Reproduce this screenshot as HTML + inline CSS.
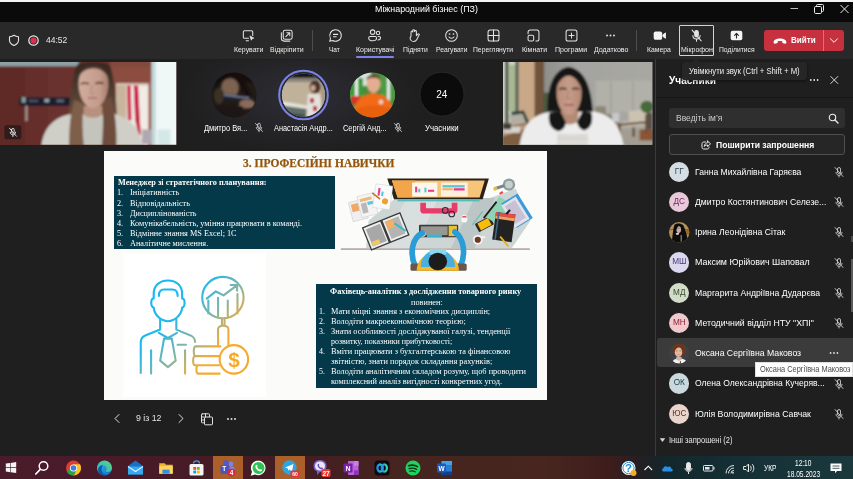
<!DOCTYPE html>
<html lang="uk">
<head>
<meta charset="utf-8">
<title>Міжнародний бізнес (ПЗ)</title>
<style>
*{box-sizing:border-box;margin:0;padding:0}
html,body{width:853px;height:479px;overflow:hidden;background:#1f1f1f;font-family:"Liberation Sans",sans-serif;color:#fff}
#app{will-change:transform;position:relative;width:853px;height:479px;overflow:hidden;background:#1f1f1f}
.abs{position:absolute}
svg{overflow:visible}
.t{position:absolute;white-space:nowrap;transform-origin:0 0;color:#fff}
.ico{fill:none;stroke:#e4e4e4;stroke-width:1.1;stroke-linecap:round;stroke-linejoin:round}
#topstrip{left:0;top:0;width:853px;height:2px;background:#f4f4f4}
#titlebar{left:0;top:2px;width:853px;height:19.800px;background:#0a0a0a}
#toolbar{left:0;top:21.800px;width:853px;height:37.100px;background:#292929}
.tbl{font-size:8.100px;line-height:10px;top:45px;color:#ededed}
.tbi{position:absolute;top:28.300px;width:15px;height:15px;margin-left:-7.500px}
.lbl{font-size:8.300px;line-height:11px;top:122.600px;color:#fff}
.stitle{font-family:"Liberation Serif",serif;font-weight:bold;font-size:13.200px;line-height:16px;color:#93560c;-webkit-text-stroke:.25px #93560c}
.s1{font-family:"Liberation Serif",serif;font-size:9px;line-height:10px;color:#fff}
.n1{transform:scaleX(.915)}
.n2{transform:scaleX(.96)}
.s2{font-family:"Liberation Serif",serif;font-size:8.300px;line-height:10px;color:#fff}
.b{font-weight:bold}
.ptitle{font-size:11px;line-height:14px;font-weight:bold}
.tip{font-size:8.200px;line-height:11px;color:#f0f0f0}
.tip2{font-size:8.400px;line-height:11px;color:#4a4a4a}
.pbtn{font-size:9.500px;line-height:12px;font-weight:bold}
.oth{font-size:8.500px;line-height:12px;color:#e8e8e8}
.nm{font-size:9.600px;line-height:13px;color:#fff}
.av{position:absolute;left:669.100px;width:20.400px;height:20.400px;border-radius:50%;font-size:8.200px;line-height:20.400px;text-align:center;font-weight:normal;overflow:hidden;margin-top:-10.200px}
.mc{position:absolute;left:833px;width:12px;height:12px;margin-top:-6px}
.ph1{background:radial-gradient(circle at 45% 40%,#c8a896 0,#c8a896 18%,#1a1614 22%,#1a1614 60%,#6a5a44 100%)}
.ph2{background:radial-gradient(circle at 50% 42%,#e0b09a 0,#e0b09a 20%,#6a3a28 24%,#5a3224 45%,#2a3440 50%,#2a3440 100%)}
.tray{font-size:8.800px;line-height:10px;color:#fff}
</style>
</head>
<body>
<div id="app">
<div id="topstrip" class="abs"></div>
<div id="titlebar" class="abs"></div>
<div class="t" style="left:375.3px;transform:scaleX(0.9871);top:3.300px;font-size:9px;line-height:12px">Міжнародний бізнес (ПЗ)</div>
<div id="toolbar" class="abs"></div>
<!-- window controls -->
<svg class="abs" style="left:770px;top:2px" width="83" height="19" viewBox="0 0 83 19">
 <g stroke="#ececec" stroke-width="1" fill="none">
  <path d="M20.500 6.500h7.500" stroke-width=".8"/>
  <rect x="44.500" y="4.500" width="7" height="7" rx="1.200"/>
  <path d="M46.500 4.500v-1c0-.6.400-1 1-1h5c.6 0 1 .4 1 1v5c0 .6-.4 1-1 1h-1"/>
  <path d="M70.500 3l8 8M78.500 3l-8 8"/>
 </g>
</svg>
<svg class="abs" style="left:7.500px;top:33.500px" width="12" height="13" viewBox="0 0 12 13"><path class="ico" d="M6 1.200c1.300 1 2.800 1.400 4.500 1.500v3.600c0 2.400-1.700 4.100-4.500 5.300C3.200 10.400 1.500 8.700 1.500 6.300V2.700C3.200 2.600 4.700 2.200 6 1.200z"/></svg>
<svg class="abs" style="left:28px;top:34.700px" width="11" height="11" viewBox="0 0 11 11"><circle cx="5.500" cy="5.500" r="4.700" fill="none" stroke="#ececec" stroke-width="1.200"/><circle cx="5.500" cy="5.500" r="3.100" fill="#d9314e"/></svg>
<div class="t" style="left:45.900px;transform:scaleX(0.9261);top:35px;font-size:9.200px;line-height:11px;color:#e8e8e8">44:52</div>

<svg class="tbi" style="left:248.4px" viewBox="0 0 16 16"><path class="ico" d="M12.500 8V4.200c0-.7-.5-1.200-1.200-1.200H3.700c-.7 0-1.200.5-1.200 1.200v5.600c0 .7.500 1.200 1.200 1.200H8M5.500 13.500H8"/><path d="M9.500 8.500l4.200 2.300-1.900.4-.8 1.800z" fill="#e4e4e4" stroke="#e4e4e4" stroke-width=".8" stroke-linejoin="round"/></svg>
<div class="t tbl" style="left:234.0px;transform:scaleX(0.8537);">Керувати</div>
<svg class="tbi" style="left:286.8px" viewBox="0 0 16 16"><rect class="ico" x="4.500" y="2.500" width="9.500" height="9.500" rx="2"/><path class="ico" d="M11.500 14H5.500C3.800 14 2.500 12.700 2.500 11V5"/><path class="ico" d="M7.300 9.200l4-4M8.300 5h3.200v3.200"/></svg>
<div class="t tbl" style="left:269.7px;transform:scaleX(0.8636);">Відкріпити</div>
<svg class="tbi" style="left:335.0px" viewBox="0 0 16 16"><path class="ico" d="M8 1.800a6.200 6.200 0 1 1-3 11.600L1.800 14.200l.9-3.100A6.200 6.200 0 0 1 8 1.800z"/><path class="ico" d="M5.800 6.800h4.600M5.800 9.300h3"/></svg>
<div class="t tbl" style="left:329.4px;transform:scaleX(0.8037);">Чат</div>
<svg class="tbi" style="left:374.6px" viewBox="0 0 16 16"><circle class="ico" cx="6" cy="4.400" r="2.400"/><circle class="ico" cx="11.800" cy="5.200" r="1.800"/><path class="ico" d="M1.800 10.700c0-.9.700-1.600 1.600-1.600h5.200c.9 0 1.600.7 1.600 1.600 0 1.800-1.600 3-4.200 3s-4.200-1.200-4.200-3z"/><path class="ico" d="M11.800 9.100h1.200c.8 0 1.400.6 1.400 1.400 0 1.400-1 2.300-2.700 2.400"/></svg>
<div class="t tbl" style="left:355.7px;transform:scaleX(0.8593);">Користувачі</div>
<svg class="tbi" style="left:414.7px" viewBox="0 0 16 16"><path class="ico" d="M4.300 8.500V4.200a.95.95 0 0 1 1.900 0V2.700a.95.95 0 0 1 1.900 0v1a.95.95 0 0 1 1.900 0v4.500l1.500-1.600c.5-.5 1.300-.4 1.700.2l-2.700 5.400c-.6 1.300-1.800 2.200-3.500 2.200-2.100 0-3.700-1.600-3.700-3.700z"/></svg>
<div class="t tbl" style="left:402.7px;transform:scaleX(0.8395);">Підняти</div>
<svg class="tbi" style="left:451.1px" viewBox="0 0 16 16"><circle class="ico" cx="8" cy="8" r="6.200"/><path class="ico" d="M5.300 9.600c1.400 1.800 4 1.800 5.400 0"/><circle cx="5.900" cy="6.400" r=".9" fill="#e4e4e4"/><circle cx="10.100" cy="6.400" r=".9" fill="#e4e4e4"/></svg>
<div class="t tbl" style="left:435.5px;transform:scaleX(0.8304);">Реагувати</div>
<svg class="tbi" style="left:493.2px" viewBox="0 0 16 16"><rect class="ico" x="2.200" y="2.200" width="11.600" height="11.600" rx="2.200"/><path class="ico" d="M8 2.200v11.600M2.200 8h11.600"/></svg>
<div class="t tbl" style="left:473.2px;transform:scaleX(0.8362);">Переглянути</div>
<svg class="tbi" style="left:533.9px" viewBox="0 0 16 16"><path class="ico" d="M2.200 6V4.400c0-1.200 1-2.200 2.200-2.200h7.200c1.200 0 2.200 1 2.200 2.200v7.200c0 1.200-1 2.200-2.200 2.200H10.500"/><rect class="ico" x="2.200" y="7.800" width="6" height="6" rx="1.600"/></svg>
<div class="t tbl" style="left:521.6px;transform:scaleX(0.8623);">Кімнати</div>
<svg class="tbi" style="left:571.0px" viewBox="0 0 16 16"><rect class="ico" x="2.200" y="2.200" width="11.600" height="11.600" rx="2.200"/><path class="ico" d="M8 5.300v5.400M5.300 8h5.400"/></svg>
<div class="t tbl" style="left:555.2px;transform:scaleX(0.8705);">Програми</div>
<svg class="tbi" style="left:610.4px" viewBox="0 0 16 16"><circle cx="4.300" cy="8" r="1" fill="#e4e4e4"/><circle cx="8" cy="8" r="1" fill="#e4e4e4"/><circle cx="11.700" cy="8" r="1" fill="#e4e4e4"/></svg>
<div class="t tbl" style="left:593.6px;transform:scaleX(0.8709);">Додатково</div>
<svg class="tbi" style="left:659.1px" viewBox="0 0 16 16"><rect x="1.800" y="3.600" width="9" height="9" rx="2" fill="#f4f4f4"/><path d="M11.600 7.200l2.800-2v5.800l-2.800-2z" fill="#f4f4f4" stroke="#f4f4f4" stroke-width=".9" stroke-linejoin="round"/></svg>
<div class="t tbl" style="left:647.3px;transform:scaleX(0.8411);">Камера</div>
<svg class="tbi" style="left:696.7px" viewBox="0 0 16 16"><path class="ico" style="fill:#e4e4e4" d="M6.100 4.500v3.300a1.900 1.900 0 0 0 3.800 0V4.500a1.900 1.900 0 0 0-3.800 0z"/><path class="ico" d="M4.100 8c0 2.100 1.700 3.800 3.900 3.800s3.900-1.700 3.900-3.800M8 11.800v2.200M3.300 2.300l9.700 11.400"/></svg>
<div class="t tbl" style="left:680.6px;transform:scaleX(0.8688);">Мікрофон</div>
<svg class="tbi" style="left:736.8px" viewBox="0 0 16 16"><rect x="1.800" y="3" width="12.400" height="10" rx="2" fill="#f4f4f4"/><path d="M8 10.700V6M6 7.800l2-2 2 2" fill="none" stroke="#292929" stroke-width="1.200" stroke-linecap="round" stroke-linejoin="round"/></svg>
<div class="t tbl" style="left:718.8px;transform:scaleX(0.8361);">Поділитися</div>
<div class="abs" style="left:312px;top:30.400px;width:1px;height:20.400px;background:#4d4d4d"></div>
<div class="abs" style="left:636px;top:30.400px;width:1px;height:20.400px;background:#4d4d4d"></div>
<div class="abs" style="left:355.700px;top:56px;width:38.400px;height:2px;background:#7b83eb;border-radius:1px"></div>
<div class="abs" style="left:679px;top:25px;width:34.500px;height:30.700px;border:1px solid #d4d4d4;border-radius:1px"></div>
<div class="abs" style="left:763.700px;top:30.100px;width:80.500px;height:20.600px;background:#c7303f;border-radius:3px"></div>
<div class="abs" style="left:823px;top:30.100px;width:1px;height:20.600px;background:#dc6f78"></div>
<svg class="abs" style="left:773px;top:36.500px" width="14" height="8" viewBox="0 0 14 8"><path d="M.6 5.300C.6 2.700 3.800 1.500 7 1.500s6.400 1.200 6.400 3.800c0 1-.5 1.500-1.300 1.400l-1.900-.4c-.6-.1-.9-.5-.9-1.100V4.300c-1.500-.4-3.100-.4-4.600 0v.9c0 .6-.3 1-.9 1.100l-1.900.4C1.100 6.800.6 6.300.6 5.300z" fill="#fff"/></svg>
<div class="t" style="left:791.300px;transform:scaleX(0.8213);top:34.300px;font-size:9.800px;line-height:12px;font-weight:bold">Вийти</div>
<svg class="abs" style="left:829px;top:37px" width="10" height="7" viewBox="0 0 10 7"><path d="M1.200 1.500l3.800 3.800 3.800-3.800" fill="none" stroke="#fff" stroke-width="1"/></svg>

<!-- left video -->
<svg class="abs" style="left:0;top:62.100px" width="176.300" height="82.800" viewBox="0 0 176.300 82.800">
 <defs>
  <filter id="b1" x="-10%" y="-10%" width="120%" height="120%"><feGaussianBlur stdDeviation="1.200"/></filter>
  <filter id="bz" x="-10%" y="-10%" width="120%" height="120%"><feGaussianBlur stdDeviation="5"/></filter>
  <linearGradient id="wallL" gradientUnits="userSpaceOnUse" x1="-218" x2="200" y1="0" y2="0"><stop offset="0" stop-color="#5a2a28"/><stop offset="0.500" stop-color="#683230"/><stop offset="1" stop-color="#703733"/></linearGradient>
  <linearGradient id="hairL" x1="0" x2="0" y1="0" y2="1"><stop offset="0" stop-color="#35261f"/><stop offset="0.400" stop-color="#574034"/><stop offset="1" stop-color="#86664e"/></linearGradient>
  <linearGradient id="skinL" x1="0" x2="1" y1="0" y2="0"><stop offset="0" stop-color="#d2ac9c"/><stop offset="0.700" stop-color="#c49c8c"/><stop offset="1" stop-color="#a88070"/></linearGradient>
  <clipPath id="cv1"><rect width="176.300" height="82.800"/></clipPath>
 </defs>
 <g clip-path="url(#cv1)">
  <rect width="177" height="83" fill="#6d2d2a"/>
  <g transform="translate(40,-2.300) scale(0.18372)" filter="url(#bz)">
   <rect x="-230" y="0" width="640" height="480" fill="#6a312d"/><rect x="-230" y="0" width="150" height="480" fill="#5e2a27"/><rect x="-80" y="0" width="120" height="480" fill="#652e2a"/>
   <rect x="-230" y="0" width="440" height="36" fill="#8da1a6"/>
   <rect x="380" y="0" width="240" height="480" fill="#8c4e40"/>
   <rect x="380" y="0" width="240" height="40" fill="#824a3e"/>
   <rect x="415" y="130" width="185" height="350" fill="#f1ebe4"/>
   <rect x="415" y="130" width="55" height="350" fill="#c9b49c"/>
   <rect x="415" y="130" width="185" height="10" fill="#d8c8b8"/>
   <path d="M474 140h20l4 190h-20z" fill="#d0204c"/>
   <path d="M510 140h24l10 200 6 70h-14l-18-80z" fill="#c81a48"/>
   <rect x="590" y="120" width="24" height="360" fill="#9a6252"/>
   <rect x="555" y="380" width="50" height="80" fill="#b0a8b0"/>
   <rect x="608" y="0" width="150" height="480" fill="#f0f7f7"/>
   <rect x="608" y="0" width="22" height="480" fill="#c0dadd"/>
   <rect x="640" y="380" width="70" height="90" fill="#d4e8e8"/>
   <rect x="-112" y="206" width="284" height="46" rx="6" fill="#1b1e2e"/>
   <rect x="-100" y="204" width="22" height="30" fill="#8aa09e"/>
   <rect x="-60" y="218" width="50" height="12" fill="#4a5666"/>
   <rect x="24" y="212" width="26" height="20" fill="#98a8a8"/>
   <rect x="90" y="216" width="40" height="16" fill="#5a6878"/>
   <rect x="-80" y="250" width="12" height="84" fill="#a89a98"/>
   <path d="M150 480C148 300 170 90 200 30 225 8 350 8 380 30c28 60 45 260 40 450z" fill="url(#hairL)"/>
   <path d="M5 480c10-100 60-160 150-182l250-4c90 26 140 80 158 186z" fill="#cfcfc8"/>
   <path d="M240 300h90l30 180H215z" fill="#c4c4bc"/>
   <path d="M236 250h104v50c-30 22-76 22-104 0z" fill="#b8907e"/>
   <path d="M158 480c0-120 10-200 30-260l50 20c-10 80-8 160 2 240z" fill="#7e5e48"/>
   <path d="M335 480c10-90 10-180 0-250l50-30c24 80 36 190 30 280z" fill="#6e4e3c"/>
   <path d="M210 130c0-60 30-95 82-95s80 35 80 95c0 70-36 134-82 134s-80-64-80-134z" fill="url(#skinL)"/>
   <path d="M200 110c10-60 40-84 90-84s82 30 90 90c-20-50-50-70-88-70s-72 20-92 64z" fill="#46322a"/>
   <path d="M222 132q22-10 44 0" stroke="#4a3028" stroke-width="9" fill="none"/>
   <path d="M302 130q22-10 44 0" stroke="#4a3028" stroke-width="9" fill="none"/>
   <path d="M262 210q24-6 48 0" stroke="#a86a66" stroke-width="9" fill="none"/>
   <path d="M282 140l-6 44h20" stroke="#b08a7a" stroke-width="6" fill="none"/>
  </g>
  <rect x="4.400" y="63.200" width="17" height="14" rx="2" fill="#2b1b1b" opacity=".93"/>
  <g transform="translate(8.400,65.200)" fill="none" stroke="#e8e8e8" stroke-width=".9" stroke-linecap="round"><path d="M3.200 2.500v2.200a1.300 1.300 0 0 0 2.600 0V2.500a1.300 1.300 0 0 0-2.600 0zM1.800 5c0 1.500 1.200 2.700 2.700 2.700S7.200 6.500 7.200 5M4.500 7.700V9.400M1 1l7 8"/></g>
 </g>
</svg>
<!-- right video -->
<svg class="abs" style="left:503px;top:62.100px" width="149.300" height="82.800" viewBox="0 0 149.300 82.800">
 <defs><clipPath id="cv2"><rect width="149.300" height="82.800"/></clipPath>
 <linearGradient id="wallR" x1="0" x2="1" y1="0" y2="0"><stop offset="0" stop-color="#8c8c88"/><stop offset="0.300" stop-color="#a4a4a0"/><stop offset="1" stop-color="#a9a8a2"/></linearGradient>
 <linearGradient id="skinR" x1="0" x2="1" y1="0" y2="0"><stop offset="0" stop-color="#b88e7a"/><stop offset="0.500" stop-color="#c69c88"/><stop offset="1" stop-color="#b48a76"/></linearGradient></defs>
 <g clip-path="url(#cv2)">
  <rect width="150" height="83" fill="#a4a4a0"/>
  <g transform="translate(-3,-2.500) scale(0.18375)" filter="url(#bz)">
   <rect x="230" y="0" width="620" height="480" fill="url(#wallR)"/>
   <rect x="520" y="115" width="310" height="170" fill="#b1b0a9"/>
   <rect x="600" y="120" width="8" height="160" fill="#a09f99"/><rect x="720" y="120" width="8" height="160" fill="#a09f99"/>
   <rect x="0" y="0" width="105" height="480" fill="#ccd3c2"/>
   <rect x="50" y="30" width="36" height="250" fill="#a8b890"/>
   <rect x="28" y="0" width="18" height="380" fill="#50544e"/>
   <rect x="84" y="0" width="18" height="300" fill="#585c58"/>
   <rect x="102" y="0" width="90" height="480" fill="#c8a886"/>
   <rect x="188" y="0" width="52" height="480" fill="#70523a"/>
   <rect x="236" y="180" width="30" height="120" fill="#4a5a40"/>
   <rect x="10" y="345" width="180" height="140" fill="#7e5e42"/>
   <path d="M10 380l170-36v20L10 420z" fill="#b89878"/>
   <path d="M60 285l70-8 30 66-90 6z" fill="#2e4238"/>
   <path d="M50 305l72-10 20 50-80 16z" fill="#b4aea2"/>
   <rect x="20" y="365" width="90" height="34" fill="#d8d4cc"/>
   <rect x="20" y="350" width="40" height="30" fill="#3a3a3a"/>
   <rect x="640" y="380" width="200" height="100" fill="#a29c92"/>
   <rect x="760" y="380" width="80" height="60" fill="#8a5434"/>
   <rect x="518" y="255" width="58" height="50" rx="8" fill="#8e8676"/>
   <rect x="560" y="300" width="90" height="50" fill="#8a8478"/>
   <path d="M700 280l90-8 12 70-100 14z" fill="#cbc2b2"/>
   <path d="M660 340l130-6v22l-124 8z" fill="#d0c8ba"/>
   <path d="M640 350h16v60h-16zM790 300h14v100h-14zM720 370h14v50h-14zM640 350l150-14v12l-150 14z" fill="#6e5038"/>
   <rect x="610" y="290" width="40" height="50" fill="#c8c8c8"/>
   <ellipse cx="800" cy="258" rx="36" ry="34" fill="#466a3a"/>
   <rect x="800" y="290" width="30" height="90" fill="#5a5046"/>
   <path d="M262 320C250 200 270 60 372 40c104 18 130 140 136 280 2 40-14 68-40 68H310c-30 0-44-28-48-68z" fill="#161514"/>
   <path d="M105 480c12-110 60-180 170-196h240c100 20 140 80 160 196z" fill="#ececec"/>
   <path d="M330 280h100l-10 60c-26 18-56 18-82 0z" fill="#b48a74"/>
   <path d="M268 290c-10 50 6 90 50 100 26-6 40-24 40-50l-30-60zM498 290c12 50-4 86-40 96-24-8-38-28-38-50l30-56z" fill="#161514"/>
   <path d="M308 180c0-60 26-100 68-100s68 40 68 100c0 66-30 122-68 122s-68-56-68-122z" fill="url(#skinR)"/>
   <path d="M300 170c4-70 30-112 72-120 44 8 72 50 78 124-20-56-44-84-76-86-30 2-56 28-74 82z" fill="#161514"/>
   <path d="M322 162q20-10 40 0" stroke="#3a2620" stroke-width="9" fill="none"/>
   <path d="M392 162q20-10 40 0" stroke="#3a2620" stroke-width="9" fill="none"/>
   <path d="M350 244q26 8 52 0" stroke="#b0566a" stroke-width="10" fill="none"/>
   <path d="M372 170l-8 42h24" stroke="#a87e6a" stroke-width="6" fill="none"/>
   <path d="M310 400c40 20 120 20 170 0v80H310z" fill="#dedcd6"/>
   <path d="M330 410h130M320 430h150" stroke="#b0aca4" stroke-width="6" stroke-dasharray="6 10"/>
  </g>
 </g>
</svg>
<!-- avatars -->
<div class="abs" style="left:150px;top:60px;width:330px;height:90px;background:radial-gradient(ellipse 120px 60px at 150px 36px,rgba(70,70,95,.35),rgba(40,40,50,0) 100%)"></div>
<svg class="abs" style="left:205.400px;top:66.100px" width="265" height="58" viewBox="0 0 265 58">
 <defs>
  <clipPath id="ca1"><circle cx="29" cy="29" r="22.500"/></clipPath>
  <clipPath id="ca2"><circle cx="98.500" cy="29" r="21.600"/></clipPath>
  <clipPath id="ca3"><circle cx="167.500" cy="29" r="22.500"/></clipPath>
 </defs>
 <g clip-path="url(#ca1)"><rect x="5" y="5" width="48" height="48" fill="#211b17"/>
  <g filter="url(#b1)">
   <rect x="4" y="4" width="50" height="12" fill="#14100e"/>
   <ellipse cx="25" cy="22" rx="9" ry="10" fill="#7c6250"/>
   <path d="M11 24c-2-14 6-20 15-20s15 6 13 18c-3-7-7-10-13-10s-11 4-15 12z" fill="#15100d"/>
   <path d="M36 10l12 22-4 3-12-20z" fill="#15110f"/>
   <path d="M14 27l34 4v6l-34-4z" fill="#1c2030"/>
   <path d="M16 28.500l28 3.500" stroke="#8088a0" stroke-width="1.500"/>
   <ellipse cx="42" cy="38" rx="8" ry="4.500" fill="#8a6a58"/>
   <rect x="4" y="40" width="34" height="14" fill="#1a1512"/>
   <ellipse cx="14" cy="30" rx="5" ry="8" fill="#3a3028"/>
  </g></g>
 <circle cx="98.500" cy="29" r="24.300" fill="none" stroke="#7b83eb" stroke-width="2"/>
 <g clip-path="url(#ca2)"><rect x="75" y="5" width="48" height="48" fill="#b9aa92"/>
  <g filter="url(#b1)">
   <rect x="74" y="4" width="50" height="9" fill="#15151a"/>
   <rect x="74" y="12" width="50" height="4" fill="#8a8478"/>
   <rect x="74" y="16" width="36" height="24" fill="#c0b29a"/>
   <path d="M74 36l34 6v14H74z" fill="#5f6e66"/>
   <path d="M74 35l36 6v3l-36-5z" fill="#e8e6e0"/>
   <path d="M80 46l26 4v6H80z" fill="#3a4a48"/>
   <ellipse cx="110" cy="21" rx="5.500" ry="6.500" fill="#4a3028"/>
   <ellipse cx="108" cy="22" rx="2.500" ry="3" fill="#d0a890"/>
   <path d="M103 28h12l4 26h-18z" fill="#e4e0dc"/>
   <path d="M105 32h4v5h-4zM108 40h4v5h-4z" fill="#b42a36"/>
   <rect x="116" y="14" width="8" height="40" fill="#a89a84"/>
  </g></g>
 <g clip-path="url(#ca3)"><rect x="144" y="5" width="48" height="48" fill="#4a8c3c"/>
  <g filter="url(#b1)">
   <rect x="144" y="4" width="22" height="16" fill="#d8e4dc"/>
   <rect x="144" y="12" width="14" height="20" fill="#3c9a3c"/>
   <rect x="150" y="8" width="3" height="30" fill="#e8f0e8"/>
   <rect x="146" y="30" width="10" height="8" fill="#d8342c"/>
   <rect x="176" y="6" width="18" height="28" fill="#4e9a44"/>
   <rect x="182" y="10" width="3" height="26" fill="#e4ece4"/>
   <rect x="144" y="40" width="50" height="14" fill="#5a9a48"/>
   <path d="M148 54c0-16 6-26 20-27 14 1 22 10 22 27z" fill="#f26a12"/>
   <path d="M150 44c10-6 26-6 38 0v6c-12 4-26 4-38 0z" fill="#e85e0c"/>
   <ellipse cx="168.500" cy="18" rx="7" ry="9" fill="#e4ac90"/>
   <path d="M161 14c1-7 14-7 15 0-4-3-11-3-15 0z" fill="#6a4a30"/>
   <circle cx="176" cy="36" r="2.200" fill="#e8d8c8"/>
  </g></g>
 <circle cx="237" cy="28.200" r="22" fill="#0b0b0b" stroke="#2c2c2c" stroke-width=".8"/>
 <text x="236.800" y="31.700" text-anchor="middle" font-family="Liberation Sans, sans-serif" font-size="10" fill="#fff">24</text>
</svg>
<svg class="abs" style="left:253.600px;top:122px" width="10" height="11" viewBox="0 0 10 11"><g fill="none" stroke="#c8c8c8" stroke-width=".9" stroke-linecap="round"><path d="M3.700 2.500v2.700a1.300 1.300 0 0 0 2.600 0V2.500a1.300 1.300 0 0 0-2.600 0zM2.300 5.500c0 1.500 1.200 2.700 2.700 2.700S7.700 7 7.700 5.500M5 8.200V9.800M1.500 1.500l7 8"/></g></svg>
<svg class="abs" style="left:392.500px;top:122px" width="10" height="11" viewBox="0 0 10 11"><g fill="none" stroke="#c8c8c8" stroke-width=".9" stroke-linecap="round"><path d="M3.700 2.500v2.700a1.300 1.300 0 0 0 2.600 0V2.500a1.300 1.300 0 0 0-2.600 0zM2.300 5.500c0 1.500 1.200 2.700 2.700 2.700S7.700 7 7.700 5.500M5 8.200V9.800M1.500 1.500l7 8"/></g></svg>
<div class="t lbl" style="left:204px;transform:scaleX(0.8994);">Дмитро Вя...</div>
<div class="t lbl" style="left:273.7px;transform:scaleX(0.8844);">Анастасія Андр...</div>
<div class="t lbl" style="left:343.4px;transform:scaleX(0.8915);">Сергій Анд...</div>
<div class="t lbl" style="left:425px;transform:scaleX(0.9402);">Учасники</div>

<div class="abs" style="left:104.200px;top:150.700px;width:442.800px;height:249.100px;background:#fbfbfa"></div>
<div class="abs" style="left:123px;top:253px;width:143px;height:144px;background:#fff"></div>
<div class="t stitle" style="left:243px;transform:scaleX(0.8712);top:154.600px">3. ПРОФЕСІЙНІ НАВИЧКИ</div>
<div class="abs" style="left:114px;top:175.700px;width:221.200px;height:73.300px;background:#04394a"></div>
<div class="t s1 b" style="left:118.0px;transform:scaleX(0.9161);top:177.1px">Менеджер зі стратегічного планування:</div>
<div class="t s1 n1" style="left:117.400px;top:187.4px">1.</div><div class="t s1" style="left:130.4px;transform:scaleX(0.9153);top:187.4px">Ініціативність</div>
<div class="t s1 n1" style="left:117.400px;top:197.6px">2.</div><div class="t s1" style="left:130.4px;transform:scaleX(0.9110);top:197.6px">Відповідальність</div>
<div class="t s1 n1" style="left:117.400px;top:207.7px">3.</div><div class="t s1" style="left:130.4px;transform:scaleX(0.9100);top:207.7px">Дисциплінованість</div>
<div class="t s1 n1" style="left:117.400px;top:217.6px">4.</div><div class="t s1" style="left:130.4px;transform:scaleX(0.9189);top:217.6px">Комунікабельність, уміння працювати в команді.</div>
<div class="t s1 n1" style="left:117.400px;top:227.5px">5.</div><div class="t s1" style="left:130.4px;transform:scaleX(0.9147);top:227.5px">Відмінне знання MS Excel; 1C</div>
<div class="t s1 n1" style="left:117.400px;top:237.6px">6.</div><div class="t s1" style="left:130.4px;transform:scaleX(0.9121);top:237.6px">Аналітичне мислення.</div>
<div class="abs" style="left:315.600px;top:284px;width:221.200px;height:103.800px;background:#04394a"></div>
<div class="t s2 b" style="left:330.4px;transform:scaleX(1.0006);top:286.8px">Фахівець-аналітик з дослідженни товарного ринку</div>
<div class="t s2" style="left:410.6px;transform:scaleX(0.9960);top:297.7px">повинен:</div>
<div class="t s2 n2" style="left:319px;top:307.1px">1.</div><div class="t s2" style="left:330.8px;transform:scaleX(1.0019);top:307.1px">Мати міцні знання з економічних дисциплін;</div>
<div class="t s2 n2" style="left:319px;top:316.9px">2.</div><div class="t s2" style="left:330.8px;transform:scaleX(1.0050);top:316.9px">Володіти макроекономічною теорією;</div>
<div class="t s2 n2" style="left:319px;top:326.9px">3.</div><div class="t s2" style="left:330.8px;transform:scaleX(1.0051);top:326.9px">Знати особливості досліджуваної галузі, тенденції</div>
<div class="t s2" style="left:330.8px;transform:scaleX(0.9587);top:336.8px">розвитку, показники прибутковості;</div>
<div class="t s2 n2" style="left:319px;top:346.8px">4.</div><div class="t s2" style="left:330.8px;transform:scaleX(1.0014);top:346.8px">Вміти працювати з бухгалтерською та фінансовою</div>
<div class="t s2" style="left:330.8px;transform:scaleX(1.0018);top:356.7px">звітністю, знати порядок складання рахунків;</div>
<div class="t s2 n2" style="left:319px;top:367.0px">5.</div><div class="t s2" style="left:330.8px;transform:scaleX(1.0033);top:367.0px">Володіти аналітичним складом розуму, щоб проводити</div>
<div class="t s2" style="left:330.8px;transform:scaleX(1.0011);top:377.4px">комплексний аналіз вигідності конкретних угод.</div>
<!-- desk illustration -->
<svg class="abs" style="left:330px;top:165px" width="220" height="115" viewBox="0 0 853 446">
 <defs><filter id="b3" x="-5%" y="-5%" width="110%" height="110%"><feGaussianBlur stdDeviation="2.800"/></filter></defs>
 <g filter="url(#b3)">
  <polygon points="150,215 255,128 620,128 720,92 778,215 705,322 140,322" fill="#cdd5d5"/>
  <polygon points="300,128 420,128 330,322 180,322" fill="#d9dfdf"/>
  <polygon points="560,128 640,128 560,322 470,322" fill="#bcc6c6"/>
  <rect x="42" y="324" width="733" height="4" fill="#857575"/>
  <polygon points="222,52 616,52 592,133 248,133" fill="#2a2018"/>
  <polygon points="240,60 600,60 580,126 262,126" fill="#f8c47a"/>
  <polygon points="240,60 330,60 330,126 262,126" fill="#f2a648"/>
  <rect x="318" y="68" width="98" height="54" fill="#fdf6ea"/>
  <rect x="430" y="68" width="104" height="54" fill="#fdf0dc"/>
  <rect x="436" y="78" width="86" height="9" fill="#5cc6d8"/>
  <rect x="436" y="90" width="40" height="8" fill="#f0b060"/>
  <rect x="480" y="90" width="42" height="9" fill="#e83a8a"/>
  <rect x="330" y="84" width="8" height="22" fill="#e83a8a"/><rect x="342" y="92" width="8" height="14" fill="#5cc6d8"/><rect x="366" y="88" width="8" height="18" fill="#5cc6d8"/><rect x="380" y="96" width="24" height="8" fill="#e83a8a"/>
  <rect x="262" y="133" width="318" height="8" fill="#55bcbc"/>
  <path d="M350 146h22v22h100v-22h22v30c0 8-6 12-14 12H364c-8 0-14-4-14-12z" fill="#e83a6a"/>
  <g fill="none" stroke="#2a2a30" stroke-width="4"><circle cx="447" cy="176" r="11"/><circle cx="472" cy="190" r="11"/></g>
  <g transform="rotate(-14 160 150)"><rect x="75" y="125" width="60" height="76" fill="#efefef" stroke="#c8c8c8" stroke-width="2"/><rect x="82" y="135" width="28" height="30" fill="#f0a868"/><rect x="112" y="110" width="64" height="84" fill="#f4f4f4" stroke="#ccc" stroke-width="2"/><rect x="120" y="122" width="46" height="12" fill="#f0b878"/><rect x="120" y="140" width="22" height="40" fill="#b8b8b8"/><rect x="146" y="140" width="22" height="12" fill="#5cc6d8"/></g>
  <g transform="rotate(8 210 120)"><rect x="172" y="78" width="66" height="92" fill="#fafafa" stroke="#d0d0d0" stroke-width="2"/><rect x="184" y="92" width="8" height="30" fill="#e83a8a"/><rect x="198" y="104" width="8" height="18" fill="#5cc6d8"/><circle cx="216" cy="140" r="12" fill="#f0a030"/></g>
  <path d="M164 108l30 24" stroke="#c07820" stroke-width="6"/>
  <g transform="rotate(-22 215 258)"><rect x="138" y="212" width="156" height="92" fill="#eeeeee" stroke="#3a3a3a" stroke-width="5"/><rect x="148" y="222" width="58" height="72" fill="#a8a8a8"/><rect x="226" y="222" width="58" height="72" fill="#b4b4b4"/><rect x="228" y="224" width="30" height="30" fill="#f2b060"/><rect x="150" y="276" width="30" height="16" fill="#f2c860"/><rect x="211" y="212" width="9" height="92" fill="#3a3a3a"/></g>
  <path d="M250 226l44 30" stroke="#38b8c8" stroke-width="8"/>
  <rect x="345" y="232" width="152" height="48" rx="4" fill="#3a3a3a"/>
  <rect x="352" y="238" width="104" height="34" fill="#b8b8b0" opacity=".75"/>
  <rect x="460" y="236" width="32" height="40" fill="#e8c030"/>
  <rect x="376" y="270" width="58" height="9" fill="#38b8d8"/>
  <ellipse cx="358" cy="268" rx="13" ry="11" fill="#f2c8a0"/><ellipse cx="482" cy="262" rx="13" ry="11" fill="#f2c8a0"/>
  <path d="M330 392c-22-50-12-110 28-128M506 392c22-50 12-110-22-132" fill="none" stroke="#2a9cd6" stroke-width="22" stroke-linecap="round"/>
  <rect x="312" y="382" width="218" height="28" rx="6" fill="#6a544c"/>
  <path d="M336 410c0-40 30-72 82-72s82 32 82 72z" fill="#f6b828"/>
  <path d="M352 396c-4-30 20-66 66-66s70 36 66 66z" fill="#48aee0"/>
  <rect x="386" y="326" width="64" height="22" fill="#8ad8ec"/>
  <ellipse cx="418" cy="374" rx="36" ry="34" fill="#1e1e1e"/>
  <circle cx="573" cy="290" r="19" fill="#f4f4f4"/><circle cx="573" cy="290" r="12" fill="#6a3a20"/><rect x="588" y="276" width="14" height="8" fill="#f4f4f4"/>
  <g transform="rotate(-28 598 230)"><rect x="566" y="212" width="66" height="36" rx="4" fill="#2a2a2a"/><rect x="576" y="215" width="46" height="30" fill="#f8bc08"/></g>
  <ellipse cx="521" cy="208" rx="12" ry="15" fill="#f8f8f8"/><path d="M510 204a12 12 0 0 1 22 0z" fill="#e84a4a"/>
  <g transform="rotate(32 655 180)"><rect x="625" y="130" width="62" height="96" fill="#8ed4b4"/></g>
  <path d="M596 206l50-64" stroke="#1e1e1e" stroke-width="7"/>
  <path d="M552 232l40-52" stroke="#6ac0b0" stroke-width="5"/>
  <g transform="rotate(-32 728 176)"><rect x="688" y="120" width="74" height="112" fill="#3a9ad8"/><rect x="684" y="126" width="66" height="102" fill="#e4e0ec"/><rect x="694" y="136" width="46" height="80" fill="#c8c0d4"/></g>
  <g transform="rotate(8 670 240)"><rect x="636" y="186" width="76" height="108" fill="#222222"/><rect x="636" y="186" width="76" height="14" fill="#e84a4a"/><rect x="636" y="200" width="76" height="12" fill="#f0a060"/><rect x="644" y="186" width="6" height="108" fill="#3a6a8a"/></g>
  <path d="M684 190l14-16" stroke="#1a1a1a" stroke-width="8"/>
  <path d="M660 278l32 38" stroke="#e8b020" stroke-width="7"/>
  <circle cx="694" cy="76" r="24" fill="#8e9c9e"/><circle cx="694" cy="76" r="15" fill="#c4d0d0"/>
  <path d="M638 92l38-12" stroke="#7a8686" stroke-width="12"/><path d="M634 94l14-4" stroke="#e8c030" stroke-width="12"/>
  <path d="M658 112l12-8" stroke="#e84a4a" stroke-width="8"/>
 </g>
</svg>
<!-- icon illustration -->
<svg class="abs" style="left:100px;top:250px" width="240" height="155" viewBox="0 0 742 479">
 <defs><linearGradient id="gi" gradientUnits="userSpaceOnUse" x1="150" y1="120" x2="430" y2="380"><stop offset="0" stop-color="#12b8f2"/><stop offset="0.300" stop-color="#1eb8ee"/><stop offset="0.550" stop-color="#8fb59a"/><stop offset="0.720" stop-color="#f2ac3a"/><stop offset="1" stop-color="#f7a928"/></linearGradient></defs>
 <g fill="none" stroke="url(#gi)" stroke-width="6.500" stroke-linecap="round" stroke-linejoin="round">
  <path d="M166 150v-14c0-26 18-42 44-42s44 16 44 42v14c10 0 10 26 0 28-2 22-22 42-44 42s-42-20-44-42c-10-2-10-28 0-28z"/>
  <path d="M182 142c0-14 6-20 16-20h26c10 0 16 6 16 20"/>
  <path d="M186 214v32l-46 18c-10 4-14 12-14 22v94M236 214v32l44 18c8 4 14 10 14 20"/>
  <path d="M182 256l28 16 28-16M198 274h24l12 68-24 20-24-20z"/>
  <path d="M240 293h26M158 310v72M263 310v72"/>
  <circle cx="380" cy="147" r="64"/>
  <path d="M365 294v-48c0-8 6-12 16-12s16 4 16 12v48M377 212v20M385 212v20"/>
  <path d="M335 156v40M365 148v58M395 156v50M425 136v60"/>
  <path d="M330 150l28-22 24 12 40-30M404 108h20v18"/>
  <path d="M372 298h-76c-8 0-8 30 0 30M368 328h-74c-8 0-8 28 0 28h72M368 356h-64c-8 0-8 26 0 26h66"/>
  <circle cx="414" cy="338" r="44"/>
 </g>
 <text x="414" y="361" text-anchor="middle" font-family="Liberation Sans, sans-serif" font-size="64" font-weight="bold" fill="#f7a928">$</text>
</svg>
<!-- slide nav -->
<svg class="abs" style="left:110px;top:411px" width="130" height="15" viewBox="0 0 130 15">
 <g fill="none" stroke="#e0e0e0" stroke-width="1" stroke-linecap="round" stroke-linejoin="round">
  <path d="M9 3.500l-4 4 4 4M69 3.500l4 4-4 4"/>
  <rect x="91.500" y="2.800" width="8" height="9" rx=".8"/><path d="M91.500 6h2.500M91.500 9h2.500M95.500 2.800v3"/><rect x="94.500" y="6" width="8" height="7.800" rx=".8" fill="#1f1f1f"/>
 </g>
 <circle cx="118" cy="8" r="1" fill="#e0e0e0"/><circle cx="121.500" cy="8" r="1" fill="#e0e0e0"/><circle cx="125" cy="8" r="1" fill="#e0e0e0"/>
</svg>
<div class="t" style="left:136px;transform:scaleX(0.9549);top:411.700px;font-size:9.200px;line-height:12px;color:#e4e4e4">9 із 12</div>

<div class="abs" style="left:655px;top:59.300px;width:198px;height:397px;background:#1f1f1f;border-left:1px solid #3b3b3b"></div>
<div class="abs" style="left:656px;top:97px;width:197px;height:1px;background:#161616"></div>
<div class="t ptitle" style="left:668.600px;transform:scaleX(0.9171);top:72.600px">Учасники</div>
<svg class="abs" style="left:808px;top:74px" width="34" height="12" viewBox="0 0 34 12"><circle cx="2.800" cy="6" r=".9" fill="#e0e0e0"/><circle cx="6.200" cy="6" r=".9" fill="#e0e0e0"/><circle cx="9.600" cy="6" r=".9" fill="#e0e0e0"/><path d="M22.500 2.200l7.600 7.600M30.100 2.200l-7.600 7.600" stroke="#d8d8d8" stroke-width="1" fill="none"/></svg>
<svg class="abs" style="left:689px;top:57px" width="14" height="6" viewBox="0 0 14 6"><path d="M1 6l6-5 6 5z" fill="#262626"/></svg>
<div class="abs" style="left:682px;top:61.600px;width:125px;height:18px;background:#262626;border-radius:3px;box-shadow:0 1px 3px rgba(0,0,0,.55)"></div>
<div class="t tip" style="left:689.300px;transform:scaleX(0.9440);top:66px">Увімкнути звук (Ctrl + Shift + M)</div>
<div class="abs" style="left:668.600px;top:108px;width:176.600px;height:20.200px;background:#2f2f2f;border-radius:3px"></div>
<div class="t" style="left:676.200px;transform:scaleX(0.8950);top:111px;font-size:9.500px;line-height:13px;color:#cdcdcd">Введіть ім’я</div>
<svg class="abs" style="left:828px;top:112.500px" width="11" height="11" viewBox="0 0 11 11"><circle cx="4.500" cy="4.500" r="3.200" fill="none" stroke="#f0f0f0" stroke-width="1.100"/><path d="M7 7l3 3" stroke="#f0f0f0" stroke-width="1.300" stroke-linecap="round"/></svg>
<div class="abs" style="left:668.600px;top:134.200px;width:176.600px;height:20.800px;background:#262626;border:1px solid #4f4f4f;border-radius:3px"></div>
<svg class="abs" style="left:700.500px;top:140px" width="11" height="10" viewBox="0 0 11 10"><g fill="none" stroke="#e6e6e6" stroke-width="1" stroke-linecap="round" stroke-linejoin="round"><path d="M4.500 2H2.500c-.8 0-1.500.7-1.500 1.500v4c0 .8.700 1.500 1.500 1.500h4c.8 0 1.500-.7 1.500-1.500V7"/><path d="M6.500 1l3 2.800-3 2.800V5C5 5 4 5.500 3.300 6.500 3.500 4.300 4.700 3 6.500 2.700z"/></g></svg>
<div class="t pbtn" style="left:715.500px;transform:scaleX(0.9049);top:139px">Поширити запрошення</div>
<div class="abs" style="left:657px;top:338.200px;width:196px;height:29.300px;background:#3b3b3b;border-radius:3px 0 0 3px"></div>
<div class="av" style="top:171.8px;background:#d4dde1;color:#2c4854">ГГ</div><div class="t nm" style="left:694.500px;transform:scaleX(0.8934);top:164.7px">Ганна Михайлівна Гаряєва</div><svg class="mc" style="top:171.8px" viewBox="0 0 12 12"><g fill="none" stroke="#c8c8c8" stroke-width=".9" stroke-linecap="round"><path d="M4.500 3v3a1.500 1.500 0 0 0 3 0V3a1.500 1.500 0 0 0-3 0zM3 6.300c0 1.700 1.300 3 3 3s3-1.300 3-3M6 9.300V11M2 1.500l8 9"/></g></svg>
<div class="av" style="top:202.0px;background:#e8c9da;color:#7a2459">ДС</div><div class="t nm" style="left:694.500px;transform:scaleX(0.9018);top:194.9px">Дмитро Костянтинович Селезе...</div><svg class="mc" style="top:202.0px" viewBox="0 0 12 12"><g fill="none" stroke="#c8c8c8" stroke-width=".9" stroke-linecap="round"><path d="M4.500 3v3a1.500 1.500 0 0 0 3 0V3a1.500 1.500 0 0 0-3 0zM3 6.300c0 1.700 1.300 3 3 3s3-1.300 3-3M6 9.300V11M2 1.500l8 9"/></g></svg>
<svg class="abs" style="left:669.100px;top:221.800px" width="20.400" height="20.400" viewBox="155 65 350 350"><defs><clipPath id="pa1"><circle cx="330" cy="240" r="175"/></clipPath><filter id="pb" x="-10%" y="-10%" width="120%" height="120%"><feGaussianBlur stdDeviation="7"/></filter></defs><g clip-path="url(#pa1)"><rect x="150" y="60" width="360" height="360" fill="#b3925c"/><g filter="url(#pb)"><rect x="150" y="185" width="360" height="14" fill="#7c5a2e"/><rect x="440" y="200" width="70" height="80" fill="#9a6a28"/><path d="M250 110c40-30 110-30 150 10 30 60 60 150 90 300H200c20-120 20-220 50-310z" fill="#0c0b0b"/><ellipse cx="322" cy="195" rx="40" ry="58" fill="#c9aaa4"/><path d="M280 200c-6-40 10-70 40-80-20 30-24 60-40 80z" fill="#0c0b0b"/><ellipse cx="300" cy="268" rx="30" ry="18" fill="#e4cfc8"/><path d="M355 290h18v110h-18z" fill="#b89088"/><path d="M300 175h18M335 175h16" stroke="#3a2a2a" stroke-width="8"/></g></g></svg><div class="t nm" style="left:694.500px;transform:scaleX(0.9034);top:225.2px">Ірина Леонідівна Сітак</div><svg class="mc" style="top:232.3px" viewBox="0 0 12 12"><g fill="none" stroke="#c8c8c8" stroke-width=".9" stroke-linecap="round"><path d="M4.500 3v3a1.500 1.500 0 0 0 3 0V3a1.500 1.500 0 0 0-3 0zM3 6.300c0 1.700 1.300 3 3 3s3-1.300 3-3M6 9.300V11M2 1.500l8 9"/></g></svg>
<div class="av" style="top:262.5px;background:#dcd8ee;color:#4a3a80">МШ</div><div class="t nm" style="left:694.500px;transform:scaleX(0.9271);top:255.4px">Максим Юрійович Шаповал</div><svg class="mc" style="top:262.5px" viewBox="0 0 12 12"><g fill="none" stroke="#c8c8c8" stroke-width=".9" stroke-linecap="round"><path d="M4.500 3v3a1.500 1.500 0 0 0 3 0V3a1.500 1.500 0 0 0-3 0zM3 6.300c0 1.700 1.300 3 3 3s3-1.300 3-3M6 9.300V11M2 1.500l8 9"/></g></svg>
<div class="av" style="top:292.8px;background:#d1ddc9;color:#3a4c2c">МД</div><div class="t nm" style="left:694.500px;transform:scaleX(0.9008);top:285.7px">Маргарита Андріївна Дударєва</div><svg class="mc" style="top:292.8px" viewBox="0 0 12 12"><g fill="none" stroke="#c8c8c8" stroke-width=".9" stroke-linecap="round"><path d="M4.500 3v3a1.500 1.500 0 0 0 3 0V3a1.500 1.500 0 0 0-3 0zM3 6.300c0 1.700 1.300 3 3 3s3-1.300 3-3M6 9.300V11M2 1.500l8 9"/></g></svg>
<div class="av" style="top:323.0px;background:#f1c9cd;color:#8a2438">МН</div><div class="t nm" style="left:694.500px;transform:scaleX(0.9124);top:315.9px">Методичний відділ НТУ "ХПІ"</div><svg class="mc" style="top:323.0px" viewBox="0 0 12 12"><g fill="none" stroke="#c8c8c8" stroke-width=".9" stroke-linecap="round"><path d="M4.500 3v3a1.500 1.500 0 0 0 3 0V3a1.500 1.500 0 0 0-3 0zM3 6.300c0 1.700 1.300 3 3 3s3-1.300 3-3M6 9.300V11M2 1.500l8 9"/></g></svg>
<svg class="abs" style="left:669.100px;top:343px" width="20.400" height="20.400" viewBox="155 65 350 350"><defs><clipPath id="pa2"><circle cx="330" cy="240" r="175"/></clipPath></defs><g clip-path="url(#pa2)"><rect x="150" y="60" width="360" height="360" fill="#3b4149"/><g filter="url(#pb)"><path d="M220 240c-20-90 30-160 110-160s140 60 110 160c-10 30-30 40-50 30l-130-10c-20 0-34-6-40-20z" fill="#6e3518"/><path d="M210 420c0-60 40-90 120-90s130 30 130 90z" fill="#f2f2f2"/><path d="M280 300h90v50c-30 26-60 26-90 0z" fill="#dcb09a"/><ellipse cx="318" cy="222" rx="64" ry="84" fill="#e2b8a2"/><path d="M250 200c0-60 40-100 90-100 40 0 80 30 90 90-30-40-70-60-110-50-30 6-50 26-70 60z" fill="#6e3518"/><path d="M272 200h30M336 200h30" stroke="#5a3a30" stroke-width="8"/><path d="M300 266h36" stroke="#d0606a" stroke-width="9"/><rect x="342" y="376" width="14" height="40" fill="#1a1a1a"/></g></g></svg><div class="t nm" style="left:694.500px;transform:scaleX(0.9054);top:346.1px">Оксана Сергіївна Маковоз</div>
<div class="av" style="top:383.5px;background:#c9d9de;color:#1f3a46">ОК</div><div class="t nm" style="left:694.500px;transform:scaleX(0.8926);top:376.4px">Олена Олександрівна Кучеряв...</div><svg class="mc" style="top:383.5px" viewBox="0 0 12 12"><g fill="none" stroke="#c8c8c8" stroke-width=".9" stroke-linecap="round"><path d="M4.500 3v3a1.500 1.500 0 0 0 3 0V3a1.500 1.500 0 0 0-3 0zM3 6.300c0 1.700 1.300 3 3 3s3-1.300 3-3M6 9.300V11M2 1.500l8 9"/></g></svg>
<div class="av" style="top:413.8px;background:#ead5cd;color:#5c2c20">ЮС</div><div class="t nm" style="left:694.500px;transform:scaleX(0.9086);top:406.7px">Юлія Володимирівна Савчак</div><svg class="mc" style="top:413.8px" viewBox="0 0 12 12"><g fill="none" stroke="#c8c8c8" stroke-width=".9" stroke-linecap="round"><path d="M4.500 3v3a1.500 1.500 0 0 0 3 0V3a1.500 1.500 0 0 0-3 0zM3 6.300c0 1.700 1.300 3 3 3s3-1.300 3-3M6 9.300V11M2 1.500l8 9"/></g></svg>
<svg class="abs" style="left:826.500px;top:349.200px" width="14" height="8" viewBox="0 0 14 8"><circle cx="3.600" cy="4" r=".9" fill="#e0e0e0"/><circle cx="7" cy="4" r=".9" fill="#e0e0e0"/><circle cx="10.400" cy="4" r=".9" fill="#e0e0e0"/></svg>
<div class="abs" style="left:755.400px;top:362.300px;width:98px;height:14.800px;background:#fff;border:1px solid #e0e0e0"></div>
<div class="t tip2" style="left:760px;transform:scaleX(0.8847);top:364.400px">Оксана Сергіївна Маковоз</div>
<svg class="abs" style="left:659px;top:437px" width="7" height="6" viewBox="0 0 7 6"><path d="M.8 1.200h5.400L3.500 5z" fill="#d8d8d8"/></svg>
<div class="t oth" style="left:668.500px;transform:scaleX(0.8858);top:434px">Інші запрошені (2)</div>
<div class="abs" style="left:851px;top:259px;width:2px;height:53px;background:#5a5a5a"></div>
<div class="abs" style="left:851px;top:236px;width:2px;height:6px;background:#4a4a4a"></div>

<div class="abs" id="taskbar" style="left:0;top:455.500px;width:853px;height:24px;background:linear-gradient(90deg,#4a1b2a 0,#481a28 150px,#431d22 300px,#46241f 400px,#48261f 540px,#3d1d1c 610px,#231f22 640px,#12272c 668px,#163237 760px,#1b383c 853px)"></div>
<div class="abs" style="left:212.800px;top:455.500px;width:30px;height:24px;background:#ab5f29"></div>
<div class="abs" style="left:274.700px;top:455.500px;width:30px;height:24px;background:#ab5f29"></div>
<svg class="abs" style="left:0;top:455px" width="853" height="24" viewBox="0 0 853 24">
 <!-- start -->
 <g fill="#f4f4f4"><path d="M5.800 8.600l4.300-.6v4.300H5.800zM10.700 7.900l5.500-.8v5.200h-5.500zM5.800 12.900h4.300v4.300l-4.300-.6zM10.700 12.900h5.500v5.200l-5.500-.8z"/></g>
 <!-- search -->
 <circle cx="43.500" cy="11" r="4.300" fill="none" stroke="#fff" stroke-width="1.500"/><path d="M40.300 14.300l-4.500 4.700" stroke="#fff" stroke-width="1.700" stroke-linecap="round"/>
 <!-- chrome -->
 <g transform="translate(73.500,13)"><circle r="7.500" fill="#e33b2e"/><path d="M-6.500 3.750A7.500 7.500 0 0 0 0.500 7.480L3.600-1.500H-3z" fill="#2ba14b"/><path d="M0.500 7.480A7.500 7.500 0 0 0 6.500-3.750H0L3 1.500z" fill="#f8c51c"/><circle r="3.600" fill="#fff"/><circle r="2.800" fill="#3b7ee6"/></g>
 <!-- edge -->
 <defs><linearGradient id="eg1" x1="0" y1="0" x2="1" y2="1"><stop offset="0" stop-color="#35c1f1"/><stop offset="1" stop-color="#1166c4"/></linearGradient><linearGradient id="eg2" x1="0" y1="1" x2="1" y2="0"><stop offset="0" stop-color="#2aa8e8"/><stop offset="1" stop-color="#5fdc6a"/></linearGradient></defs>
 <g transform="translate(104.500,13)"><circle r="7.500" fill="url(#eg1)"/><path d="M-7.400-1A7.500 7.500 0 0 1 7.500 0c0 2.500-2 4-4.200 4-1.500 0-2.300-.8-2-1.600.8-.6 1-1.800.6-2.800C1-2.500-1.500-3.200-3.500-2.200-5.200-1.400-6.500.5-6.400 3A7.500 7.500 0 0 1-7.400-1z" fill="url(#eg2)"/><path d="M-3 1.500C-3 5 0 7.400 3.500 6.600-1 9-6.500 6-6.400 1.500-6.300-1-4-3-1.500-2.800-2.500-2-3-0.200-3 1.500z" fill="#0c59a4"/></g>
 <!-- mail -->
 <g transform="translate(135.500,13)"><path d="M-7.500-2l7.500-5.500L7.500-2v8.500h-15z" fill="#1a6fc8"/><path d="M-7.500-1.500h15v8h-15z" fill="#35a8f0"/><path d="M-7.500-1.500L0 3.500l7.500-5" fill="none" stroke="#d8f0ff" stroke-width="1.200"/></g>
 <!-- explorer -->
 <g transform="translate(166,13.300) scale(.9)"><path d="M-7.500-5.500h6l1.500 1.500h7.500v10h-15z" fill="#f0b52c"/><rect x="-7.500" y="-2.500" width="15" height="8.500" fill="#fbd65a"/><rect x="-4" y="1.500" width="8" height="4.500" fill="#3a8ee0"/></g>
 <!-- store -->
 <g transform="translate(196.500,13)"><path d="M-3-4.500c0-3.500 6-3.500 6 0" fill="none" stroke="#3aa0e8" stroke-width="1.300"/><rect x="-7" y="-4" width="14" height="11.500" rx="1.500" fill="#f4f4f4"/><rect x="-3.200" y="-1" width="2.800" height="2.800" fill="#f04e1f"/><rect x=".4" y="-1" width="2.800" height="2.800" fill="#7db900"/><rect x="-3.200" y="2.600" width="2.800" height="2.800" fill="#00a3ee"/><rect x=".4" y="2.600" width="2.800" height="2.800" fill="#ffb800"/></g>
 <!-- teams -->
 <g transform="translate(227,13)"><circle cx="4" cy="-4" r="2.400" fill="#7b83eb"/><circle cx="-1" cy="-5" r="2.800" fill="#5059c9"/><rect x="0" y="-1.500" width="7.500" height="7" rx="2" fill="#7b83eb"/><rect x="-6.500" y="-3" width="9" height="9" rx="1.500" fill="#4b53bc"/><circle cx="4.500" cy="4.500" r="3.800" fill="#e0223a"/></g>
 <text x="224.200" y="16.300" font-family="Liberation Sans, sans-serif" font-size="6.500" font-weight="bold" fill="#fff" text-anchor="middle">T</text>
 <text x="231.500" y="20" font-family="Liberation Sans, sans-serif" font-size="6.500" font-weight="bold" fill="#fff" text-anchor="middle">4</text>
 <!-- whatsapp -->
 <g transform="translate(258.500,13)"><path d="M-7.800 7.800l1.300-4A7.300 7.300 0 1 1-3.500 6.500z" fill="#fff"/><circle r="6" fill="#2fc250"/><path d="M-2.800-2.800c.6-1 1.500-.6 1.800.6.200.6-.4 1-.2 1.500.5 1 1.200 1.700 2.200 2.200.5.200.9-.4 1.500-.2 1.200.3 1.600 1.200.6 1.800-1.200.8-3 .2-4.500-1.300s-2.200-3.400-1.400-4.600z" fill="#fff"/></g>
 <!-- telegram -->
 <g transform="translate(289.500,12.500)"><circle r="7.200" fill="#2ca5e0"/><path d="M-4.500 0l8.500-3.500-1.500 7.500-2.500-2-1.300 1.300-.3-2.300z" fill="#fff"/><rect x="1" y="3" width="9" height="6.500" rx="1.500" fill="#e3323a"/></g>
 <text x="295" y="20.700" font-family="Liberation Sans, sans-serif" font-size="5" font-weight="bold" fill="#fff" text-anchor="middle">60</text>
 <!-- viber -->
 <g transform="translate(320,12.500)"><path d="M-6.500-1.500c0-4 3-6 6.500-6s6.500 2 6.500 6-3 6-6.500 6l-3 3v-3.500C-5.500 3-6.500 1-6.500-1.500z" fill="#7a5cc8"/><path d="M-5-1.500c0-3 2-4.500 5-4.500s5 1.500 5 4.500-2 4.500-5 4.500-5-1.500-5-4.500z" fill="#ece6fa"/><path d="M-2-3.500c.5-.5 1 0 1.200.8.100.5-.3.800-.2 1.200.4.800 1 1.400 1.800 1.800.4.100.7-.3 1.200-.2.800.2 1.300.7.800 1.200-1 1-2.600.4-3.900-.9S-3-2.500-2-3.500z" fill="#6a4cb8"/><rect x="1.500" y="1.500" width="9" height="8" rx="1.800" fill="#e93a33"/></g>
 <text x="326" y="20.600" font-family="Liberation Sans, sans-serif" font-size="6.500" font-weight="bold" fill="#fff" text-anchor="middle">27</text>
 <!-- onenote -->
 <g transform="translate(351,13)"><rect x="-3" y="-7" width="10.500" height="14" rx="1" fill="#b565d9"/><rect x="3" y="-7" width="4.500" height="4.700" fill="#ca7fe6"/><rect x="3" y="2.300" width="4.500" height="4.700" fill="#9332bf"/><rect x="-7.500" y="-4.500" width="9" height="9" rx="1" fill="#7a1fa8"/></g>
 <text x="348" y="16.200" font-family="Liberation Sans, sans-serif" font-size="7" font-weight="bold" fill="#fff" text-anchor="middle">N</text>
 <!-- webex-like -->
 <defs><linearGradient id="wg" x1="0" y1="0" x2="1" y2="0"><stop offset="0" stop-color="#1f8ff0"/><stop offset="1" stop-color="#35d6b0"/></linearGradient></defs>
 <g transform="translate(382,13)"><rect x="-7.500" y="-7.500" width="15" height="15" rx="3.500" fill="#0b0b10"/><g fill="none" stroke="url(#wg)" stroke-width="2.200"><ellipse cx="-2" cy="0" rx="2.600" ry="3.600"/><ellipse cx="2.300" cy="0" rx="2.600" ry="3.600"/></g></g>
 <!-- spotify -->
 <g transform="translate(413,13)"><circle r="7.500" fill="#1ed35e"/><g fill="none" stroke="#10301a" stroke-linecap="round"><path d="M-4.500-2.200c3-1 6.500-.6 9 .8" stroke-width="1.600"/><path d="M-4 .6c2.800-.8 5.500-.4 7.600.8" stroke-width="1.300"/><path d="M-3.500 3.200c2.200-.6 4.300-.3 6 .7" stroke-width="1.100"/></g></g>
 <!-- word -->
 <g transform="translate(444.500,13)"><rect x="-3" y="-7" width="10.500" height="14" rx="1" fill="#2b7cd3"/><rect x="-3" y="-7" width="10.500" height="4" fill="#41a5ee"/><rect x="-3" y="3.500" width="10.500" height="3.500" fill="#103f91"/><rect x="-7.500" y="-4.500" width="9" height="9" rx="1" fill="#185abd"/></g>
 <text x="441.500" y="16" font-family="Liberation Sans, sans-serif" font-size="6.500" font-weight="bold" fill="#fff" text-anchor="middle">W</text>
 <!-- help -->
 <g transform="translate(628.500,13)"><circle r="7" fill="#fff"/><circle r="5.600" fill="none" stroke="#1f8fd8" stroke-width="1"/><circle cx="5" cy="5" r="3" fill="#f2b01e"/></g>
 <text x="628.500" y="17.200" font-family="Liberation Sans, sans-serif" font-size="11.500" font-weight="bold" fill="#1f8fd8" text-anchor="middle">?</text>
 <!-- tray -->
 <path d="M644.500 15l3.800-3.800 3.800 3.800" fill="none" stroke="#fff" stroke-width="1.100"/>
 <path d="M664 16.500c-2 0-2.600-2.600-.6-3.300.2-2 2.700-2.800 4-1.200 1.600-1.200 3.900-.2 4 1.700 1.800.2 1.900 2.800-.2 2.800z" fill="#2a8fe6"/>
 <g fill="none" stroke="#e8e8e8" stroke-width="1"><rect x="686.500" y="7.500" width="4" height="8" rx="2" fill="#e8e8e8"/><path d="M685 13c0 4.500 7 4.500 7 0M688.500 16.500v2.500"/></g>
 <rect x="703.500" y="10.500" width="9.500" height="5.500" rx=".8" fill="none" stroke="#e8e8e8" stroke-width="1"/><rect x="705" y="12" width="4.500" height="2.500" fill="#e8e8e8"/><rect x="713.500" y="12" width="1" height="2.500" fill="#e8e8e8"/>
 <g fill="none" stroke="#e8e8e8" stroke-width="1" stroke-linecap="round"><path d="M726 18a7.500 7.500 0 0 1 7.500-7.500M728.500 18a5 5 0 0 1 5-5M731 18a2.500 2.500 0 0 1 2.500-2.500"/></g><circle cx="733" cy="17.800" r=".9" fill="#e8e8e8"/>
 <g fill="none" stroke="#e8e8e8" stroke-width="1" stroke-linejoin="round" stroke-linecap="round"><path d="M744 11.500h2l2.500-2.500v8l-2.500-2.500h-2z"/><path d="M750.500 11c1 1 1 3.500 0 4.500M752.500 9.500c1.800 2 1.800 5.500 0 7.500"/></g>
 <path d="M830.500 8.500h11v7.500h-4.500l-2 2.300V16h-4.500z" fill="#fff"/><path d="M832.500 11h7M832.500 13.300h7" stroke="#1b383c" stroke-width=".8"/>
</svg>
<div class="t tray" style="left:764px;transform:scaleX(0.7533);top:463.200px">УКР</div>
<div class="t tray" style="left:794.500px;transform:scaleX(0.7449);top:457.800px">12:10</div>
<div class="t tray" style="left:786.500px;transform:scaleX(0.7517);top:468.700px">18.05.2023</div>

</div>
</body>
</html>
